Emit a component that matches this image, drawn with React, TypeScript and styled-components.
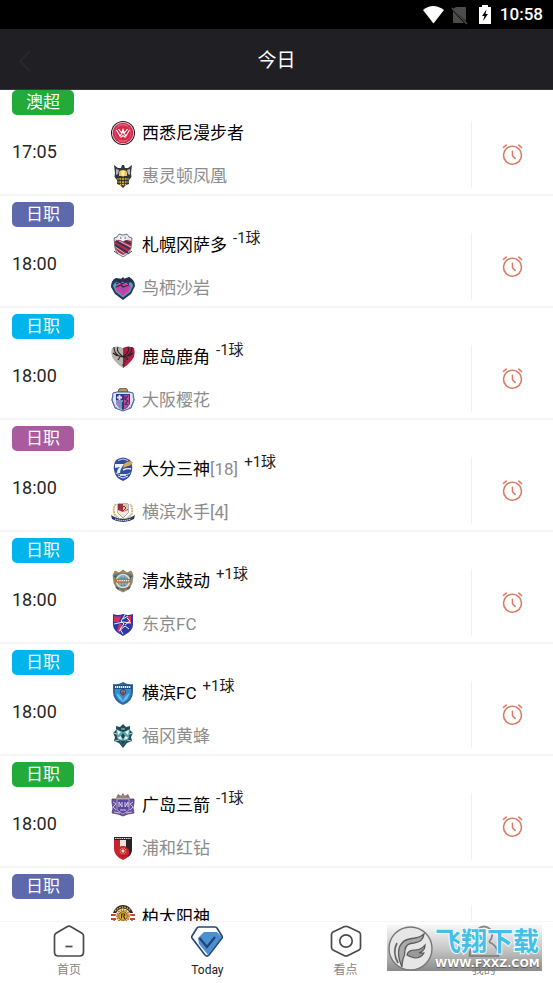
import React from 'react';
import styled, { createGlobalStyle } from 'styled-components';

const GlobalStyle = createGlobalStyle`
  * { box-sizing: border-box; }
  body {
    margin: 0;
    background: #fff;
    color: #000;
    font-family: Roboto, "Noto Sans CJK SC", sans-serif;
  }
  button { font: inherit; color: inherit; background: none; border: 0; padding: 0; cursor: pointer; }
`;

const Screen = styled.div`
  position: relative;
  display: flex;
  flex-direction: column;
  height: 100vh;
  overflow: hidden;
`;

const StatusBar = styled.div`
  flex: none;
  display: flex;
  align-items: center;
  justify-content: flex-end;
  height: 29px;
  padding: 0 10px;
  background: #000;
  color: #fff;
  font-size: 17px;
  line-height: 29px;
  font-weight: 500;
`;

const StatusIcons = styled.span`
  display: flex;
  align-items: center;
  margin-right: 7px;
  svg { display: block; }
`;

const Header = styled.header`
  flex: none;
  display: grid;
  grid-template-columns: 60px 1fr 60px;
  align-items: center;
  height: 61px;
  padding-top: 3px;
  background: #201f24;
  border-bottom: 1px solid #39363d;
`;

const BackButton = styled.button`
  display: flex;
  align-items: center;
  height: 56px;
  padding-left: 18px;
`;

const Title = styled.h1`
  margin: 0;
  color: #fff;
  font-size: 19px;
  line-height: 28px;
  font-weight: 400;
  text-align: center;
`;

const Viewport = styled.main`
  flex: 1;
  min-height: 0;
  overflow: hidden;
`;

const MatchList = styled.ul`
  list-style: none;
  margin: -6px 0 0;
  padding: 0;
`;

const Match = styled.li`
  padding-top: 6px;
  border-bottom: 2px solid #f5f5f5;
`;

const League = styled.div<{ $color: string }>`
  width: 62px;
  margin-left: 12px;
  border-radius: 5px;
  background: ${p => p.$color};
  color: #fff;
  font-size: 17px;
  line-height: 25px;
  text-align: center;
`;

const MatchBody = styled.div`
  display: grid;
  grid-template-columns: 111px 1fr 82px;
`;

const Kickoff = styled.time`
  align-self: center;
  padding: 0 0 5px 12px;
  color: #262626;
  font-size: 18px;
  line-height: 24px;
`;

const Teams = styled.div`
  display: grid;
  gap: 19px;
  padding: 6px 0;
`;

const Team = styled.div<{ $away?: boolean }>`
  display: flex;
  align-items: center;
  height: 24px;
  color: ${p => (p.$away ? '#8c8c8c' : '#000')};
  font-size: 17px;
  line-height: 24px;
  white-space: nowrap;
  svg { flex: none; display: block; margin-right: 7px; }
`;

const Rank = styled.span`
  color: #8c8c8c;
`;

const Handicap = styled.sup`
  align-self: flex-start;
  margin: -6px 0 0 6px;
  color: #222;
  font-size: 15px;
  line-height: 22px;
`;

const Alarm = styled.button`
  display: grid;
  place-items: center;
  height: 67px;
  margin-top: 6px;
  border-left: 1px solid #f0f0f0;
`;

const TabBar = styled.nav`
  flex: none;
  display: grid;
  grid-template-columns: repeat(4, 1fr);
  height: 62px;
  border-top: 1px solid #f5f5f5;
  background: #fff;
`;

const Tab = styled.button<{ $active?: boolean }>`
  display: flex;
  flex-direction: column;
  align-items: center;
  gap: 4px;
  padding-top: 3px;
  color: ${p => (p.$active ? '#222' : '#858585')};
  font-size: 12px;
  line-height: 18px;
  svg { display: block; }
`;

const Watermark = styled.div`
  position: absolute;
  right: 11px;
  bottom: 12px;
  display: flex;
  align-items: center;
  width: 155px;
  height: 46px;
  padding-left: 1px;
  background: linear-gradient(rgba(235, 235, 235, 0.4), rgba(165, 165, 165, 0.6) 50%, rgba(110, 110, 110, 0.8));
  pointer-events: none;
  svg { flex: none; display: block; }
`;

const WatermarkText = styled.div`
  margin-left: 2px;
  padding-top: 3px;
  white-space: nowrap;
`;

const WatermarkName = styled.div`
  color: #45bfe6;
  font-size: 26px;
  line-height: 28px;
  font-weight: 700;
  -webkit-text-stroke: 2px #effbff;
  paint-order: stroke fill;
`;

const WatermarkSite = styled.div`
  color: #fff;
  font-family: "DejaVu Sans", sans-serif;
  font-size: 11px;
  line-height: 15px;
  font-weight: 700;
  text-shadow: 0 1px 1px #555;
`;

const crests: Record<string, React.ReactNode> = {
  wanderers: (
    <>
      <circle cx="12" cy="12" r="12" fill="#1b1a20" />
      <circle cx="12" cy="12" r="11" fill="#f6d9df" />
      <circle cx="12" cy="12" r="10.3" fill="#d5284b" />
      <circle cx="12" cy="12" r="8" fill="none" stroke="#e9758b" strokeWidth=".6" />
      <path d="M5.500 9l3.500 6 3-4 3 4 3.500-6M7.500 8l3 4 1.500-3.500 1.500 3.500 3-4M9.500 16.500l2.500-2 2.500 2" fill="none" stroke="#fff" strokeWidth="1.100" />
      <path d="M7 4.600Q12 2 17 4.600M8 19.600Q12 21.200 16 19.600" fill="none" stroke="#f5b5c1" strokeWidth=".7" strokeDasharray="1 .7" />
    </>
  ),
  phoenix: (
    <>
      <path d="M3 1l4 3 3 0 1-3h2l1 3 3 0 4-3-1 8 .5 4L18 16v4l-3 1-3 3-3-3-3-1v-4l-2.500-3L4 9Z" fill="#33363c" />
      <path d="M5 5l3 1-1 4-2 1zM19 5l-3 1 1 4 2 1z" fill="#aeb5bd" />
      <path d="M8 9q0-3 4-3t4 3v3H8z" fill="#f0c63e" />
      <path d="M10.500 7h3v4l-1.500 2-1.500-2z" fill="#f9edb5" />
      <path d="M6.500 15h11M6.500 18h11M9 20.500h6" stroke="#e9be31" strokeWidth="1.500" />
      <path d="M8 12v8M10.500 13v8M13.500 13v8M16 12v8" stroke="#2a2c2e" strokeWidth=".8" />
    </>
  ),
  sapporo: (
    <>
      <path d="M3 5l3-1 2-3 4 1 4-1 2 3 3 1-1 10-2 5-6 4-6-4-2-5z" fill="#dfe3ea" stroke="#53596d" strokeWidth=".8" />
      <path d="M3.500 8l8.500-2 8.500 2-.5 7-3 4-5 3-5-3-3-4z" fill="#b62b42" />
      <path d="M4 12l13 8M5 8l14 8M12 7l8 4" stroke="#27375c" strokeWidth="1.900" />
      <path d="M4.500 14.200l9 6M8 8l12 6" stroke="#dce2eb" strokeWidth=".8" />
      <path d="M7 2.600l2 1.500h6l2-1.500-1 4-4 2-4-2z" fill="#f5f5f7" />
      <path d="M9 5h1.500M13.500 5H15M3 18l4 3M21 18l-4 3" stroke="#3d4354" strokeWidth="1" />
    </>
  ),
  tosu: (
    <>
      <path d="M12 24L4 18 0 11Q0 4 5 2l7 1 6-2q6 3 6 9l-4 8z" fill="#293659" />
      <path d="M12 21.500L5 16 2 10Q3 6 7 6h10q5 0 5 4l-3 6z" fill="#4ba7ca" />
      <path d="M12 20l-6-5-2-4q1-3 5-3h6q5 0 5 3l-3 5z" fill="#d93d9c" />
      <path d="M5 3l4 2 3-3 2 3 4-3 0 4 3-2M5 8l4-2 2 2 4-2 3 2M5 11l5-2 2 2 6-2" fill="none" stroke="#252b49" strokeWidth="1.300" />
      <path d="M8 12h8l-4 5z" fill="#9d4eb0" />
    </>
  ),
  kashima: (
    <>
      <path d="M12 3Q6 0 1 3q-2 7 2 12 4 5 9 8z" fill="#b8b2ab" />
      <path d="M12 3q5-3 11 0 2 7-2 12t-9 8z" fill="#b01f43" />
      <path d="M12 11q3 0 4 3l-2 5-2 4z" fill="#8d1d3b" />
      <path d="M3 2q0 6 5 9l4 1 4-1q5-3 5-9M7 2q-2 4 3 8l2 2 2-2q5-4 3-8M2 8q3 3 7 3M22 8q-3 3-7 3M9 12l-2 3M15 12l2 3M11 20h2" fill="none" stroke="#27222a" strokeWidth="1.100" />
    </>
  ),
  cerezo: (
    <>
      <path d="M7 4l1-3 4-1 4 1 1 3z" fill="#b59a5a" stroke="#705e3c" />
      <path d="M2 5l4-1h12l4 1 1 7-3 8-8 3-8-3-3-8z" fill="#dfe5f1" stroke="#40569a" strokeWidth="1" />
      <path d="M5 6h14v10l-3 4-4 2-4-2-3-4z" fill="#263b88" />
      <path d="M6 14v4M8 14v6M10 14v7M5 13h7" stroke="#e0e6f3" strokeWidth="1" />
      <path d="M13 7h5v10l-3 3-2 1z" fill="#cf468e" />
      <path d="M17 8l-3 3 3 2-3 3 3 1M14 8v4" stroke="#273881" strokeWidth="1.100" fill="none" />
      <path d="M8.500 7v5M6 9.500h5" stroke="#f1dce9" strokeWidth="1.800" />
      <path d="M2 8l-1 4 2 5 3 4M22 8l1 4-2 5-3 4" fill="none" stroke="#6177b5" strokeWidth="1.300" strokeDasharray="2 1" />
    </>
  ),
  oita: (
    <>
      <path d="M5 3q7-5 14 0 3 4 2 10-1 8-9 11-8-3-9-11-1-6 2-10z" fill="#304da3" />
      <path d="M7 3.500q5-3 10 0M4.500 16q8 4 15 0" fill="none" stroke="#bfcbed" strokeWidth="1" />
      <path d="M4 7h9l-2 3q-2 3-2 6H6q0-4 3-6l-5 1z" fill="#eef2fa" />
      <path d="M13 7q4-4 9-2-1 3-5 4l-5 2z" fill="#d3a65a" />
      <path d="M12 13q4-2 8-1M9 18h6" stroke="#eef2fa" strokeWidth="1.400" fill="none" />
      <path d="M7 19l5 2 5-2" stroke="#dfe7f7" fill="none" />
    </>
  ),
  marinos: (
    <>
      <path d="M5 4Q1 9 4 15l4 4h8l4-4q3-6-1-11" fill="none" stroke="#cdb777" strokeWidth="2" strokeDasharray="2 .6" />
      <path d="M7 4h10v9l-5 5-5-5z" fill="#b92c3d" stroke="#3a4268" strokeWidth=".8" />
      <path d="M7 10l5 2 5-2v3l-5 5-5-5z" fill="#f1e9dc" />
      <path d="M12 4h5v5l-5 3z" fill="#e2c8a4" />
      <path d="M8 6l3 2 2-2 2 2-3 3" fill="none" stroke="#77313e" strokeWidth="1" />
      <path d="M0 15q6 4 12 4t12-4l-1 4q-5 3-11 3T1 19z" fill="#28376f" />
      <path d="M4 19q8 3 16 0" fill="none" stroke="#eee" strokeWidth="1" strokeDasharray="1.400 .6" />
    </>
  ),
  shimizu: (
    <>
      <path d="M4 2l4 2 4-3 4 3 4-2 2 4-1 8-3 6-6 3-6-3-3-6-1-8z" fill="#b4864c" stroke="#695d49" strokeWidth=".6" />
      <path d="M4 5q8-2 16 0v8l-3 5-5 4-5-4-3-5z" fill="#547b8b" />
      <circle cx="12" cy="12" r="7.300" fill="#e7dfcc" />
      <circle cx="12" cy="12" r="5.800" fill="#4f7f96" />
      <path d="M7 8.500q5-2 10 0M7 15h10M9 7v10M12 6v12M15 7v10" fill="none" stroke="#b7ccd0" strokeWidth=".7" />
      <path d="M5 10h14v3.500H5z" fill="#d56937" />
      <path d="M6 11.700h12" stroke="#f7e7ca" strokeWidth="1.200" strokeDasharray="1.500 .7" />
      <path d="M5 18l3 2M19 18l-3 2M3 7l2 1M21 7l-2 1" stroke="#315c73" strokeWidth="1.500" />
    </>
  ),
  tokyo: (
    <>
      <path d="M2 2q5 2 10 0 5 2 10 0v11q0 6-10 11Q2 19 2 13z" fill="#2d37a5" />
      <path d="M3 4q4 1 7 0L8 10H3zM8 12l3 0-2 9-3-2z" fill="#d53162" />
      <path d="M16 4h4v7l-3 1z" fill="#d53162" />
      <path d="M14 3l-4 6 3 3-4 5 3 5M3 12l9-2 8 1M12 7l5-3M8 19l6-5 4 3M16 6l3 3-5 4" fill="none" stroke="#edf0fa" strokeWidth="1" />
    </>
  ),
  yokohamafc: (
    <>
      <path d="M2 3q5 1 10-2 5 3 10 2v8q0 9-10 13Q2 20 2 11z" fill="#2d659f" />
      <path d="M4 5q8 1 16 0v6q0 7-8 11Q4 18 4 11z" fill="#368dcd" />
      <path d="M3 4h18v4H3z" fill="#224c79" />
      <path d="M4 6h16" stroke="#e8f2fa" strokeWidth="1.800" strokeDasharray="1.400 .6" />
      <path d="M5 12q3 1 5 4l2 4 2-4q2-3 5-4l-3 6-4 3-4-3z" fill="#6dbae2" />
      <circle cx="12" cy="11" r="2.600" fill="#ca7f57" stroke="#204c7e" />
      <path d="M12 9v6M10 12h4" stroke="#783f48" />
    </>
  ),
  avispa: (
    <>
      <path d="M12 0l3 3 4-1v4l3 3-2 4 1 4-5 2-4 5-4-5-5-2 1-4-2-4 3-3V2l4 1z" fill="#234d5d" />
      <path d="M5 5l7 3 7-3-1 8-6 8-6-8z" fill="#57a9a7" />
      <path d="M6 6l4 2-3 3zM18 6l-4 2 3 3zM6 14l4-2 1 4zM18 14l-4-2-1 4z" fill="#e8f1ef" />
      <path d="M8 4h8l-1 3H9zM12 9l2 3-2 3-2-3zM9 16l3 5 3-5-3 1z" fill="#1f4056" />
      <path d="M2 9l4 1M22 9l-4 1M4 17l4-1M20 17l-4-1M10 5h4" stroke="#b1d7cd" strokeWidth="1.200" />
    </>
  ),
  hiroshima: (
    <>
      <path d="M5 5l2-4 3 2 2-3 2 3 3-2 2 4z" fill="#837184" />
      <path d="M1 6h22v4l-1 5 1 5-6 1-5 2-5-2-6-1 1-5-1-5z" fill="#6851a0" stroke="#544076" strokeWidth=".8" />
      <path d="M6 6h12v11l-6 4-6-4z" fill="#59469a" stroke="#c8b4d9" strokeWidth=".8" />
      <path d="M8 9v5M8 9l3 5V9M14 9v5l3-5v5M9 17h6" stroke="#ddcdea" fill="none" strokeWidth="1" />
      <path d="M2 9l3 2-3 3 3 3M22 9l-3 2 3 3-3 3M3 19l6 1M21 19l-6 1" stroke="#c9b9d8" fill="none" strokeWidth="1" />
      <path d="M5 5h14M9 3h6" stroke="#ae9b7a" strokeWidth="1.200" />
    </>
  ),
  urawa: (
    <>
      <path d="M3 1h18v12q0 7-9 11-9-4-9-11z" fill="#c4242f" />
      <path d="M15 4h6v9q0 5-4 8l-2-4zM3 1h18v3H3z" fill="#282329" />
      <path d="M9 4h6v10H9z" fill="#eee4dd" />
      <path d="M4 2.500h16" stroke="#ddd" strokeWidth="1" strokeDasharray="1.500 .7" />
      <path d="M6 14l4-4h4l4 4v5l-6 4-6-4z" fill="#cf202d" />
      <circle cx="12" cy="15" r="3.500" fill="#e87c64" />
      <path d="M12 11v9M8 15h8M9 12l6 6M15 12l-6 6M7 20h10" stroke="#a51b25" strokeWidth=".9" />
      <circle cx="12" cy="15" r="1.400" fill="#ffe0c7" />
    </>
  ),
  kashiwa: (
    <>
      <path d="M2 8Q5 0 12 0t10 8z" fill="#292522" />
      <path d="M4 6Q12-2 20 6" stroke="#e5bc32" strokeWidth="1.400" strokeDasharray="1.600 1" fill="none" />
      <path d="M0 10h5M0 14h5M24 10h-5M24 14h-5" stroke="#ba473a" strokeWidth="2" />
      <circle cx="12" cy="11" r="7.500" fill="#fbf0cf" />
      <circle cx="12" cy="11" r="6" fill="#f2d16f" stroke="#be5b39" strokeWidth="1.500" strokeDasharray="1.500 1" />
      <circle cx="12" cy="11" r="4.300" fill="#eeb72c" stroke="#50412a" strokeWidth=".8" />
      <path d="M10.500 8.500v5M10.500 9h3q1 2-1 2l1.500 3" stroke="#362d20" strokeWidth="1.200" fill="none" />
      <path d="M2 16q10 12 20 0" fill="none" stroke="#292522" strokeWidth="3" />
    </>
  ),
};

function Crest({ name }: { name: string }) {
  return <svg width="24" height="24" viewBox="0 0 24 24" aria-hidden="true">{crests[name]}</svg>;
}

interface Side { name: string; crest: string; rank?: string }
interface Fixture { league: string; color: string; time?: string; home: Side; away?: Side; handicap?: string }

const green = '#22ab38';
const indigo = '#5e68ad';
const cyan = '#00b5ec';
const purple = '#aa5a9f';

const fixtures: Fixture[] = [
  { league: '澳超', color: green, time: '17:05', home: { name: '西悉尼漫步者', crest: 'wanderers' }, away: { name: '惠灵顿凤凰', crest: 'phoenix' } },
  { league: '日职', color: indigo, time: '18:00', home: { name: '札幌冈萨多', crest: 'sapporo' }, away: { name: '鸟栖沙岩', crest: 'tosu' }, handicap: '-1球' },
  { league: '日职', color: cyan, time: '18:00', home: { name: '鹿岛鹿角', crest: 'kashima' }, away: { name: '大阪樱花', crest: 'cerezo' }, handicap: '-1球' },
  { league: '日职', color: purple, time: '18:00', home: { name: '大分三神', crest: 'oita', rank: '[18]' }, away: { name: '横滨水手', crest: 'marinos', rank: '[4]' }, handicap: '+1球' },
  { league: '日职', color: cyan, time: '18:00', home: { name: '清水鼓动', crest: 'shimizu' }, away: { name: '东京FC', crest: 'tokyo' }, handicap: '+1球' },
  { league: '日职', color: cyan, time: '18:00', home: { name: '横滨FC', crest: 'yokohamafc' }, away: { name: '福冈黄蜂', crest: 'avispa' }, handicap: '+1球' },
  { league: '日职', color: green, time: '18:00', home: { name: '广岛三箭', crest: 'hiroshima' }, away: { name: '浦和红钻', crest: 'urawa' }, handicap: '-1球' },
  { league: '日职', color: indigo, home: { name: '柏太阳神', crest: 'kashiwa' } },
];

function AlarmIcon() {
  return (
    <svg width="22" height="22" viewBox="0 0 22 22" fill="none" stroke="#e07b66" strokeWidth="1.600" strokeLinecap="round" aria-hidden="true">
      <circle cx="10.500" cy="11.300" r="9" />
      <path d="M10.500 7.200v4.500l2.700 2.800M1.500 3.300l2.700-2.200M19.500 3.300l-2.700-2.200" />
    </svg>
  );
}

function MatchRow({ match }: { match: Fixture }) {
  const { league, color, time, home, away, handicap } = match;
  return (
    <Match>
      <League $color={color}>{league}</League>
      <MatchBody>
        <Kickoff>{time}</Kickoff>
        <Teams>
          <Team>
            <Crest name={home.crest} />
            {home.name}
            {home.rank && <Rank>{home.rank}</Rank>}
            {handicap && <Handicap>{handicap}</Handicap>}
          </Team>
          {away && (
            <Team $away>
              <Crest name={away.crest} />
              {away.name}
              {away.rank && <Rank>{away.rank}</Rank>}
            </Team>
          )}
        </Teams>
        <Alarm aria-label={`${home.name} 提醒`}><AlarmIcon /></Alarm>
      </MatchBody>
    </Match>
  );
}

const lineIcon = { width: 32, height: 32, viewBox: '0 0 32 32', fill: 'none', 'aria-hidden': true } as const;

export default function App() {
  return (
    <Screen>
      <GlobalStyle />
      <StatusBar>
        <StatusIcons>
          <svg width="71" height="20" viewBox="0 0 71 20" aria-hidden="true">
            <path d="M1 5Q11-3 22 5L11.500 18.500z" fill="#fff" />
            <path d="M34 2h9q1 0 1 1v13L31 4M31 6v11q0 1 1 1h10z" fill="#4c4c4c" />
            <path d="M30 3l15 16" stroke="#4c4c4c" strokeWidth="1.400" />
            <path d="M57 2h3V0h6v2h3v17H57z" fill="#fff" />
            <path d="M64.500 4.500L60 11h2.500l-1.500 5 5-7h-2.500z" fill="#000" />
          </svg>
        </StatusIcons>
        10:58
      </StatusBar>
      <Header>
        <BackButton aria-label="返回">
          <svg width="13" height="22" viewBox="0 0 13 22" fill="none" stroke="#2b2a2e" strokeWidth="1.500" aria-hidden="true"><path d="M12 1L2 11l10 10" /></svg>
        </BackButton>
        <Title>今日</Title>
      </Header>
      <Viewport>
        <MatchList>
          {fixtures.map(match => <MatchRow key={match.home.name} match={match} />)}
        </MatchList>
      </Viewport>
      <TabBar>
        <Tab>
          <svg {...lineIcon} stroke="#4b4b4b" strokeWidth="1.700">
            <path d="M14 1.800q2-1.200 4 0l11 6.500q1.500 1 1.500 2.700v16q0 4-4 4h-21q-4 0-4-4V11q0-1.700 1.500-2.700z" />
            <path d="M12.500 21.500h7" />
          </svg>
          首页
        </Tab>
        <Tab $active>
          <svg {...lineIcon}>
            <path d="M13 7h13l5 5-14 18L8 19l-1-6z" fill="#4b91d2" />
            <path d="M8 2h16q1 0 2 1l5 8q.7 1 0 2L18 30q-2 2-4 0L1 13q-.7-1 0-2l5-8q1-1 2-1z" stroke="#28457c" strokeWidth="1.700" />
            <path d="M8.500 13l7.500 9 8-10" stroke="#244176" strokeWidth="2.200" />
          </svg>
          Today
        </Tab>
        <Tab>
          <svg {...lineIcon} stroke="#4b4b4b" strokeWidth="1.700">
            <path d="M14 1.800q2-1 4 0l11 5.200q1.500 1 1.500 2.500v13q0 1.500-1.500 2.500l-11 5.500q-2 1-4 0L3 25q-1.500-1-1.500-2.500v-13Q1.500 8 3 7z" />
            <circle cx="16" cy="16" r="6.200" />
          </svg>
          看点
        </Tab>
        <Tab>
          <svg {...lineIcon} stroke="#4b4b4b" strokeWidth="1.700">
            <path d="M10 17Q5 9 10 4q6-5 12 0 5 6-1 13" />
            <path d="M10 17q-8 3-8.500 14h29Q30 20 21 17" />
          </svg>
          我的
        </Tab>
      </TabBar>
      <Watermark>
        <svg width="45" height="45" viewBox="0 0 45 45" aria-hidden="true">
          <circle cx="22.500" cy="22.500" r="21.500" fill="#e6e6e6" stroke="#777" strokeWidth="1.400" />
          <path d="M14 41Q7 25 14 17q3-4 13-5 6-1 9-4-1 8-10 9-8 0-9 7 0 5-2 9-1 4-1 8z" fill="#a9a9a9" stroke="#5d5d5d" strokeWidth="1.300" />
          <path d="M19 29q1-5 8-5 6 0 10-5 0 6-6 8h5q-3 5-9 5-5-1-8-3z" fill="#999" stroke="#555" strokeWidth="1.200" />
          <path d="M9 17q-5 9 1 20" fill="none" stroke="#666" strokeWidth="1.800" />
        </svg>
        <WatermarkText>
          <WatermarkName>飞翔下载</WatermarkName>
          <WatermarkSite>WWW.FXXZ.COM</WatermarkSite>
        </WatermarkText>
      </Watermark>
    </Screen>
  );
}
